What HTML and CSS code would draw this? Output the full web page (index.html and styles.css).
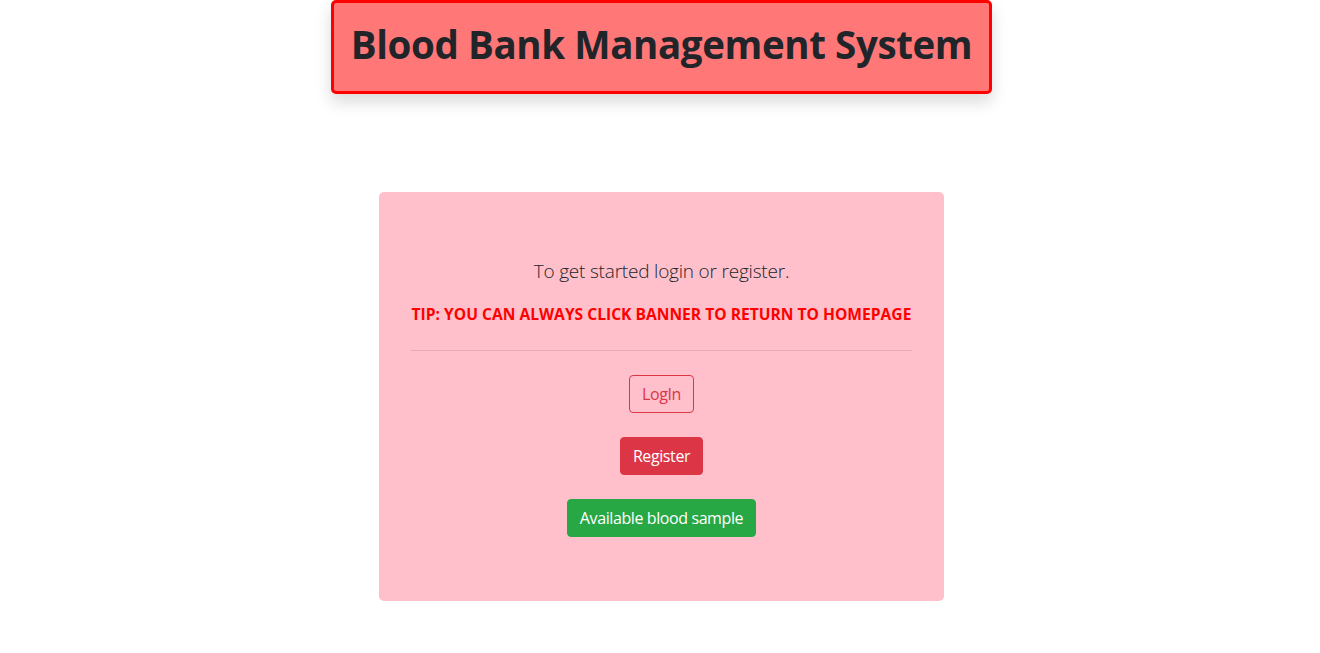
FILE: index.html
```html
<!DOCTYPE html>
<html lang="en">
<head>
<meta charset="utf-8">
<title>Blood Bank Management System</title>
<link rel="stylesheet" href="styles.css">
</head>
<body>
<div class="page">
  <header class="banner-wrap">
    <a class="banner" href="#"><h1>Blood Bank Management System</h1></a>
  </header>
  <main class="jumbotron">
    <p class="lead">To get started login or register.</p>
    <p class="tip">TIP: YOU CAN ALWAYS CLICK BANNER TO RETURN TO HOMEPAGE</p>
    <hr class="divider">
    <div class="actions">
      <a class="btn btn-outline-danger" href="#">LogIn</a>
      <a class="btn btn-danger" href="#">Register</a>
      <a class="btn btn-success" href="#">Available blood sample</a>
    </div>
  </main>
</div>
</body>
</html>
```
FILE: styles.css
```css
* { box-sizing: border-box; }
html, body { margin: 0; padding: 0; background: #fff; }
body {
  font-family: "Open Sans", "Noto Sans", "Liberation Sans", sans-serif;
  font-size: 16px;
  line-height: 1.5;
  color: #212529;
}
.page {
  display: flex;
  flex-direction: column;
  align-items: center;
  padding-left: 3px;
}
.banner-wrap {
  display: flex;
  justify-content: center;
}
.banner {
  display: block;
  background: #ff7777;
  border: 3px solid #ff0000;
  border-radius: 5px;
  padding: 17px 16.5px 23px;
  box-shadow: 0 8px 16px rgba(0,0,0,0.15);
  text-decoration: none;
  color: #212529;
}
.banner h1 {
  margin: 0;
  font-size: 38.5px;
  letter-spacing: -0.4px;
  font-weight: 700;
  line-height: 48px;
  white-space: nowrap;
}
.jumbotron {
  margin-top: 98px;
  width: 565px;
  background: #ffc0cb;
  border-radius: 5px;
  padding: 64px 32px;
  text-align: center;
}
.lead {
  margin: 0 0 16px;
  font-size: 19px;
  letter-spacing: -0.2px;
  font-weight: 300;
  line-height: 30px;
}
.tip {
  margin: 0;
  color: #ff0000;
  font-weight: 700;
  font-size: 15.6px;
  line-height: 24px;
}
.divider {
  margin: 24px 0;
  border: 0;
  border-top: 1px solid rgba(0,0,0,0.1);
}
.actions {
  display: flex;
  flex-direction: column;
  align-items: center;
  gap: 24px;
}
.btn {
  display: inline-block;
  padding: 6px 12px;
  font-size: 16px;
  letter-spacing: -0.4px;
  line-height: 24px;
  border: 1px solid transparent;
  border-radius: 4px;
  text-decoration: none;
}
.btn-outline-danger { color: #dc3545; border-color: #dc3545; }
.btn-danger { color: #fff; background: #dc3545; border-color: #dc3545; }
.btn-success { color: #fff; background: #28a745; border-color: #28a745; }
```
